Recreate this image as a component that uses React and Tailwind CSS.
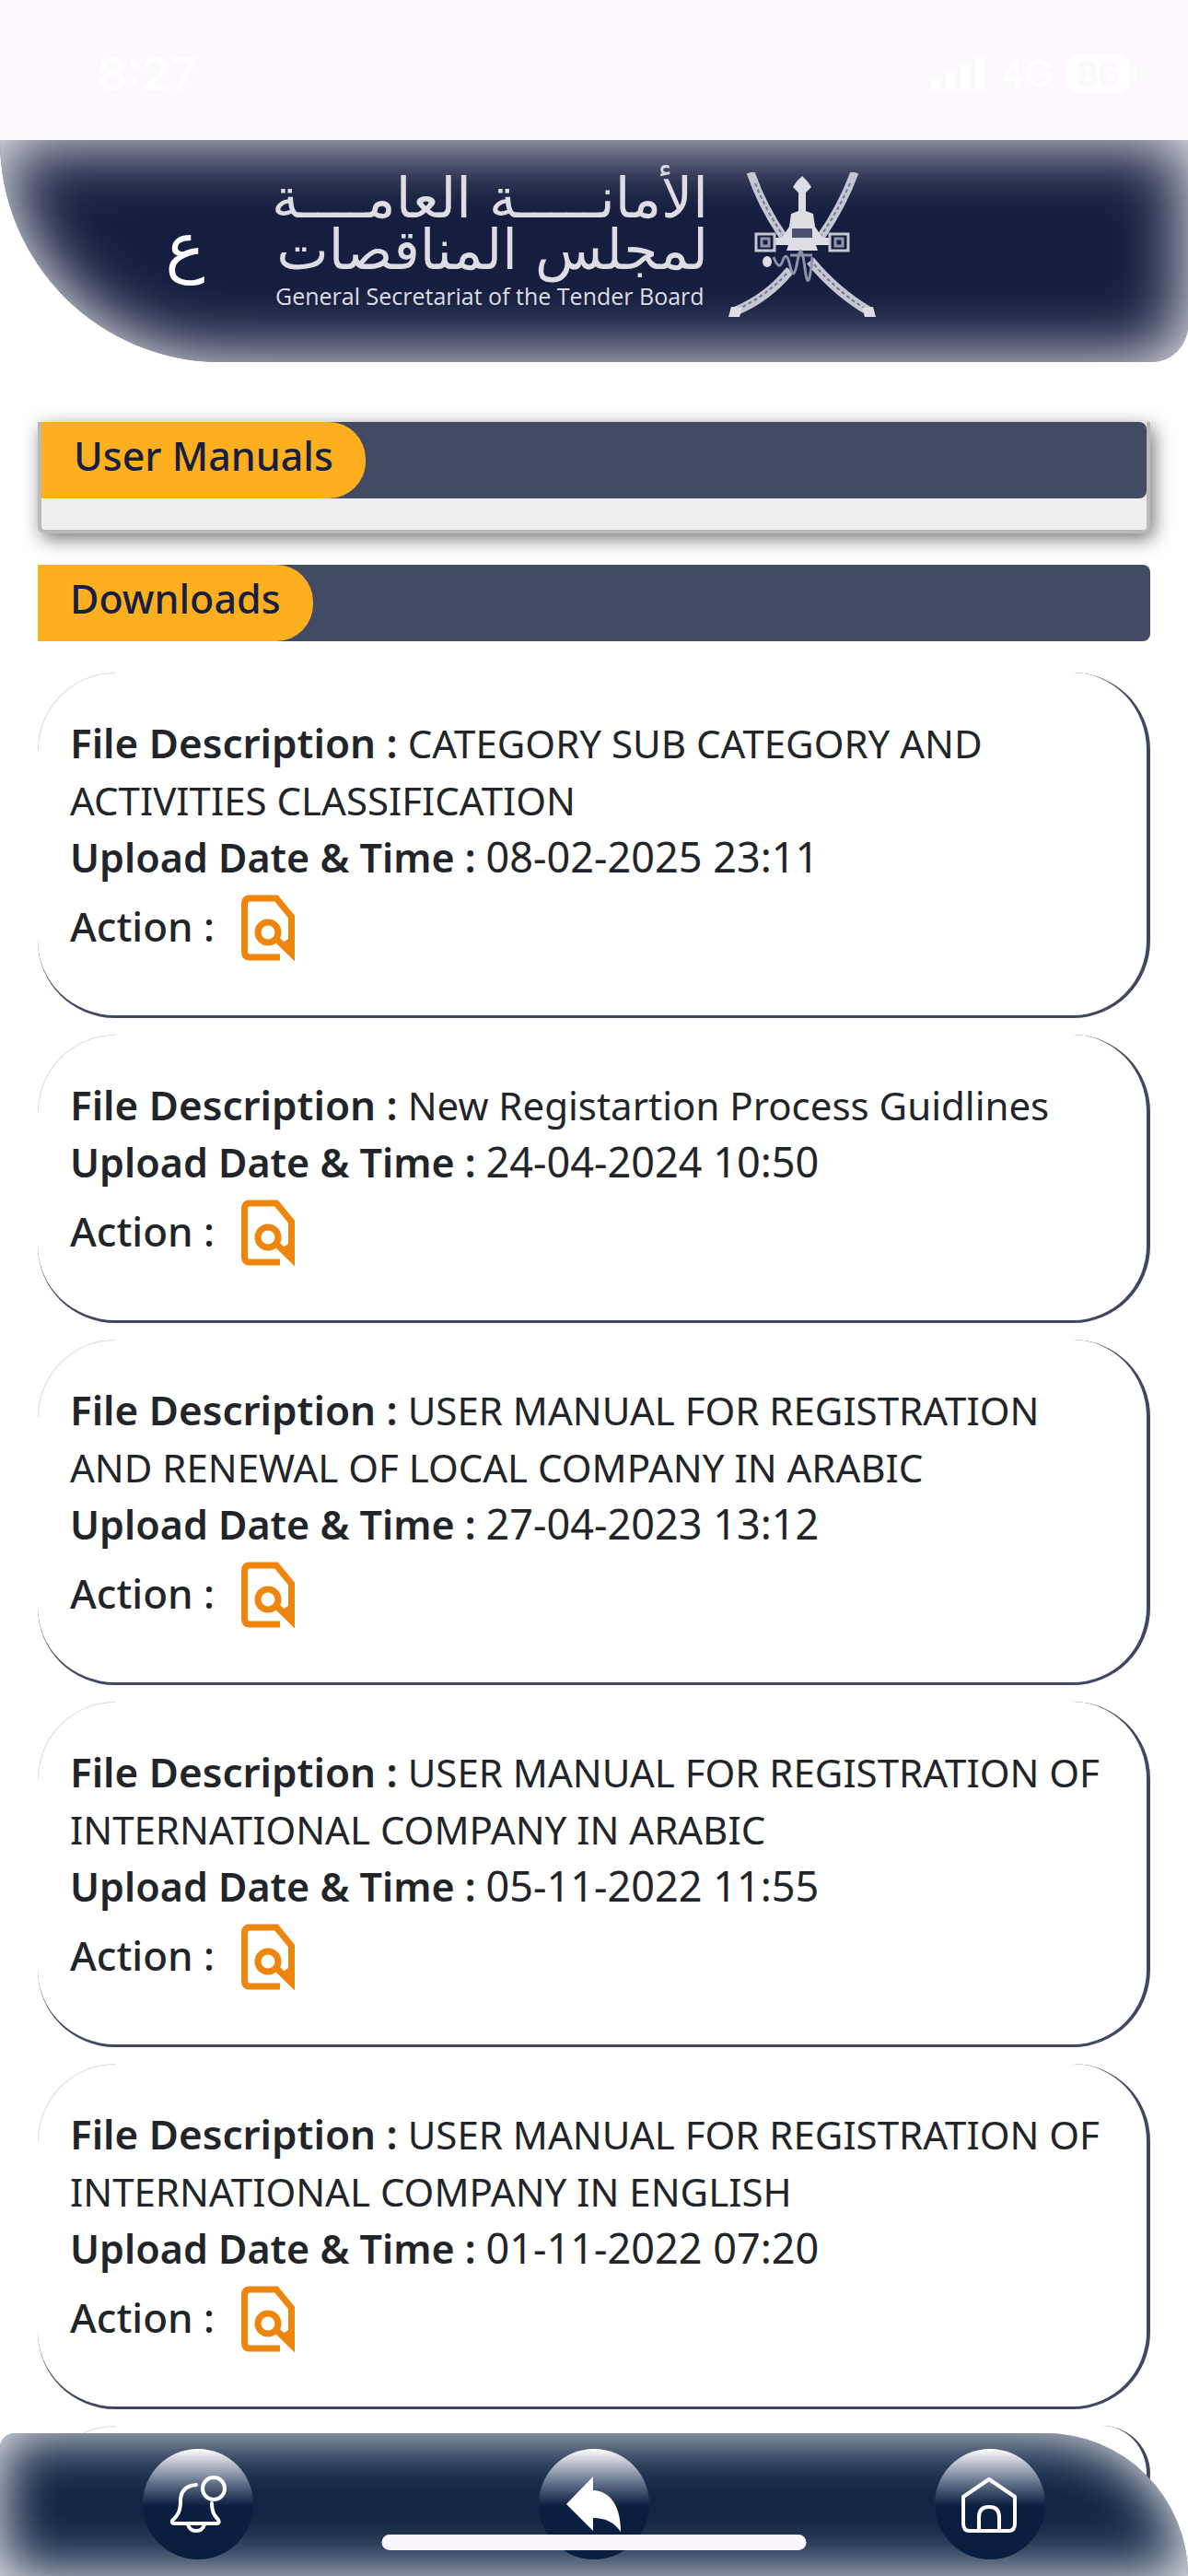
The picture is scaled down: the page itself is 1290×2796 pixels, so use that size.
import React from 'react'

const files = [
  { description: 'CATEGORY SUB CATEGORY AND ACTIVITIES CLASSIFICATION', date: '08-02-2025 23:11' },
  { description: 'New Registartion Process Guidlines', date: '24-04-2024 10:50' },
  { description: 'USER MANUAL FOR REGISTRATION AND RENEWAL OF LOCAL COMPANY IN ARABIC', date: '27-04-2023 13:12' },
  { description: 'USER MANUAL FOR REGISTRATION OF INTERNATIONAL COMPANY IN ARABIC', date: '05-11-2022 11:55' },
  { description: 'USER MANUAL FOR REGISTRATION OF INTERNATIONAL COMPANY IN ENGLISH', date: '01-11-2022 07:20' },
]

function StatusBar() {
  return (
    <div className="flex h-[152px] items-center justify-between bg-[#fef7ff] pt-2 pl-[106px] pr-[56px] font-[Inter,sans-serif] text-white">
      <span className="text-[50px] font-semibold">8:27</span>
      <div className="flex items-center gap-4">
        <svg className="h-9 w-[60px]" viewBox="0 0 60 36" fill="currentColor">
          <rect x="0" y="24" width="11" height="12" rx="3" />
          <rect x="16" y="16" width="11" height="20" rx="3" />
          <rect x="32" y="8" width="11" height="28" rx="3" />
          <rect x="48" y="0" width="11" height="36" rx="3" />
        </svg>
        <span className="text-[40px] font-medium">4G</span>
        <div className="flex items-center gap-[3px]">
          <span className="flex h-10 w-[68px] items-center justify-center rounded-xl bg-white text-4xl font-bold text-[#fef7ff]">86</span>
          <span className="h-3 w-1 rounded-r bg-white" />
        </div>
      </div>
    </div>
  )
}

function Emblem() {
  return (
    <svg className="h-[158px] w-[162px]" viewBox="0 0 162 158" fill="none" stroke="#c4c6d2">
      <path d="M25 0Q38 38 62 72M138 0Q124 38 100 72" strokeWidth="9" />
      <path d="M90 96Q118 130 154 151M68 106Q44 136 8 151" strokeWidth="10" />
      <path d="M30 12Q42 42 60 68M133 12Q120 42 102 68M94 100Q120 130 148 147M64 110Q42 134 14 147" stroke="#737892" strokeWidth="2" strokeDasharray="4 3" />
      <path d="M1 157l3-11 12 1-3 10zM161 157l-3-11-12 1 3 10z" fill="#dddde4" stroke="none" />
      <path d="M81 4l6 6 4 6-6 6v20l8 3 2 14 8 12h9v8H96l2 6H64l2-6H50v-8h9l8-12 2-14 8-3V22l-6-6 4-6z" fill="#dddde4" stroke="none" />
      <path d="M71 62h20v8H71z" fill="#4b506f" stroke="#4b506f" strokeWidth="2" />
      <path d="M31 67h20v18H31zM111 67h20v18h-20z" strokeWidth="3" />
      <path d="M37 72h8v8h-8zM117 72h8v8h-8z" strokeWidth="3" stroke="#9295aa" />
      <ellipse cx="43" cy="97" rx="5" ry="6" fill="#dddde4" stroke="none" />
      <path d="M50 92q6 16 10 4t8 6 8-6 8 8 8-12M68 90h24" stroke="#8d91a8" strokeWidth="3" />
    </svg>
  )
}

function Header() {
  return (
    <header className="flex h-[241px] items-start rounded-br-[40px] rounded-bl-[240px] bg-[#151e3f] pl-[176px] pt-[35px] shadow-[inset_0_0_75px_#ffffff]">
      <button type="button" lang="ar" className="mt-10 w-[50px] text-center font-['DejaVu_Sans',sans-serif] text-[72px] leading-[80px] text-white">ع</button>
      <div className="ml-[73px] flex w-[470px] flex-col text-[#dddde4]">
        <span dir="rtl" lang="ar" className="font-['DejaVu_Sans',sans-serif] text-[60px] leading-[56px] whitespace-nowrap">الأمانـــــة العامــــة</span>
        <span dir="rtl" lang="ar" className="font-['DejaVu_Sans',sans-serif] text-[60px] leading-[56px] whitespace-nowrap">لمجلس المناقصات</span>
        <span className="mt-1 font-['Open_Sans',sans-serif] text-[25px] leading-9 font-medium whitespace-nowrap">General Secretariat of the Tender Board</span>
      </div>
      <div className="ml-[21px]">
        <Emblem />
      </div>
    </header>
  )
}

function SectionTitle({ children }) {
  return (
    <div className="flex h-[83px] rounded-r-lg bg-[#434a64]">
      <h2 className="h-full rounded-r-[40px] bg-[#fdaf20] px-[35px] text-[43px] leading-[74px] font-medium text-[#171f3f]">{children}</h2>
    </div>
  )
}

function FileIcon() {
  return (
    <svg className="h-[76px] w-[60px]" viewBox="0 0 60 76" fill="none" stroke="#ee850c" strokeWidth="7">
      <path d="M43 70H10Q4.500 70 4.500 64V12Q4.500 6 10 6H39L55.500 26V66L40 51" />
      <path d="M59 74L42 57 52 50 59 56z" fill="#ee850c" stroke="none" />
      <circle cx="30" cy="43" r="11" />
    </svg>
  )
}

function Card({ children }) {
  return (
    <li className="relative rounded-[84px] border-r-4 border-b-[3px] border-[#404762] px-[35px] pt-[46px] pb-[55px]">
      <span className="absolute top-0 left-0 size-[84px] rounded-tl-[84px] border-t border-l border-[#d9dae0]" />
      {children}
    </li>
  )
}

function FileCard({ file }) {
  return (
    <Card>
      <p><b className="text-[44px] leading-none font-semibold">File Description :</b> {file.description}</p>
      <p><b className="text-[43px] leading-none font-semibold">Upload Date &amp; Time :</b> <span className="text-[45px] leading-none">{file.date}</span></p>
      <div className="flex h-[85px] items-center">
        <span className="text-[44px] leading-[62px] font-medium">Action :</span>
        <button type="button" aria-label="View file" className="mt-1 ml-7">
          <FileIcon />
        </button>
      </div>
    </Card>
  )
}

function NavButton({ label, children }) {
  return (
    <button
      type="button"
      aria-label={label}
      className="flex size-[120px] items-center justify-center rounded-full bg-linear-to-b from-white via-[#0a1e3f] via-52% to-[#0a1e3f] text-white"
    >
      {children}
    </button>
  )
}

function BottomNav() {
  return (
    <nav className="fixed inset-x-0 bottom-0 flex h-[155px] justify-around rounded-tl-[16px] rounded-tr-[155px] bg-[#102443] pt-[17px] shadow-[inset_0_0_64px_#ffffff]">
      <NavButton label="Notifications">
        <svg className="size-[64px]" viewBox="0 0 64 64" fill="none" stroke="currentColor" strokeWidth="4" strokeLinecap="round" strokeLinejoin="round">
          <path d="M30 11C18 12 13 19 13 29C13 40 10 44 4 50Q3 53 6 53H52Q56 53 54 49C49 43 47 40 47 31" />
          <path d="M21 54Q23 61 30 61Q37 61 39 54" />
          <circle cx="49" cy="15" r="12" />
        </svg>
      </NavButton>
      <NavButton label="Back">
        <svg className="size-[64px]" viewBox="0 0 64 64" fill="currentColor">
          <path d="M31 2V17C50 18 61 34 61 62Q51 47 31 47V61L2 32Z" />
        </svg>
      </NavButton>
      <NavButton label="Home">
        <svg className="size-[64px]" viewBox="0 0 64 64" fill="none" stroke="currentColor" strokeWidth="4" strokeLinejoin="round">
          <path d="M31 5L59 24V53Q59 61 52 61H10Q3 61 3 53V24Z" />
          <path d="M20 60V46Q20 35 31 35Q42 35 42 46V60" />
        </svg>
      </NavButton>
      <span className="absolute bottom-[28px] left-1/2 h-[17px] w-[461px] -translate-x-1/2 rounded-full bg-[#fbf5fc]" />
    </nav>
  )
}

export default function App() {
  return (
    <div className="h-screen overflow-hidden bg-white font-['Noto_Sans',sans-serif] text-[#212529]">
      <StatusBar />
      <Header />
      <main className="px-[41px] pt-[65px]">
        <section className="rounded-b-lg border-x-4 border-b-4 border-[#bababa] bg-[#eeeeee] pb-[34px] shadow-[4px_6px_20px_#777777]">
          <SectionTitle>User Manuals</SectionTitle>
        </section>
        <section className="mt-[34px]">
          <SectionTitle>Downloads</SectionTitle>
          <ul className="mt-[34px] flex flex-col gap-[18px] text-[42px] leading-[62px]">
            {files.map((file) => (
              <FileCard key={file.date} file={file} />
            ))}
            <Card />
          </ul>
        </section>
      </main>
      <BottomNav />
    </div>
  )
}
